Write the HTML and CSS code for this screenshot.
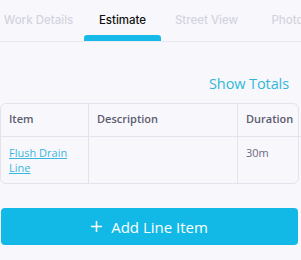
FILE: index.html
```html
<!DOCTYPE html>
<html lang="en">

<head>
    <meta charset="utf-8">
    <meta name="viewport" content="width=device-width, initial-scale=1.0">
    <title>Estimate</title>
    <link rel="stylesheet" href="styles.css">
</head>

<body>
    <nav class="tabs">
        <div class="tab">Work Details</div>
        <div class="tab active">Estimate</div>
        <div class="tab">Street View</div>
        <div class="tab">Photos</div>
    </nav>
    <div class="totals">
        <a class="show-totals">Show Totals</a>
    </div>
    <div class="table">
        <div class="cell head">Item</div>
        <div class="cell head">Description</div>
        <div class="cell head last">Duration</div>
        <div class="cell"><a class="item-link">Flush Drain Line</a></div>
        <div class="cell"></div>
        <div class="cell last">30m</div>
    </div>
    <button class="add-btn">
        <svg class="plus" width="11" height="11" viewBox="0 0 11 11">
            <path d="M5.5 0.5v10M0.5 5.5h10" stroke="#fff" stroke-width="1.6" fill="none" stroke-linecap="round"/>
        </svg>
        Add Line Item
    </button>
</body>

</html>
```

FILE: styles.css
```css
html, body {
    margin: 0;
    padding: 0;
    background: #f8f8fc;
    overflow: hidden;
    font-family: "Open Sans", sans-serif;
}

.tabs {
    display: flex;
    gap: 7px;
    height: 41px;
    border-bottom: 1px solid #e9e9f1;
    white-space: nowrap;
    overflow: hidden;
}

.tab {
    flex: 0 0 77px;
    text-align: center;
    font-family: Inter, sans-serif;
    font-size: 11.5px;
    font-weight: 500;
    color: #d3d3e0;
    padding-top: 13px;
    box-sizing: border-box;
}

.tab.active {
    color: #111;
    position: relative;
}

.tab.active::after {
    content: "";
    position: absolute;
    left: 0;
    right: 0;
    bottom: 0;
    height: 6px;
    background: #16b9e7;
    border-radius: 3px 3px 0 0;
}

.totals {
    display: flex;
    justify-content: flex-end;
    padding: 31px 12px 8px 0;
}

.show-totals {
    color: #2fb7d9;
    font-size: 14.5px;
    letter-spacing: -0.1px;
    line-height: 22px;
}

.table {
    display: grid;
    grid-template-columns: 88px 149px 1fr;
    width: 299px;
    border: 1px solid #e3e3ee;
    border-radius: 6px;
    box-sizing: border-box;
    font-size: 11px;
    color: #6b6a7c;
}

.cell {
    border-right: 1px solid #e3e3ee;
    padding: 8px 8px 0 8px;
    line-height: 15px;
    height: 46px;
    box-sizing: border-box;
}

.cell.last {
    border-right: none;
}

.cell.head {
    font-weight: 600;
    color: #5c5b70;
    height: 33px;
    padding: 7px 8px 0 8px;
    line-height: 16px;
    border-bottom: 1px solid #e3e3ee;
}

.item-link {
    color: #3ab7dc;
    text-decoration: underline;
}

.add-btn {
    display: flex;
    align-items: center;
    justify-content: center;
    gap: 9px;
    width: 297px;
    height: 37px;
    margin: 24px 0 0 1px;
    padding: 0;
    border: none;
    border-radius: 4px;
    background: #12b8e6;
    color: #fff;
    font-family: "Open Sans", sans-serif;
    font-size: 15px;
}

.plus {
    flex: none;
}
```
